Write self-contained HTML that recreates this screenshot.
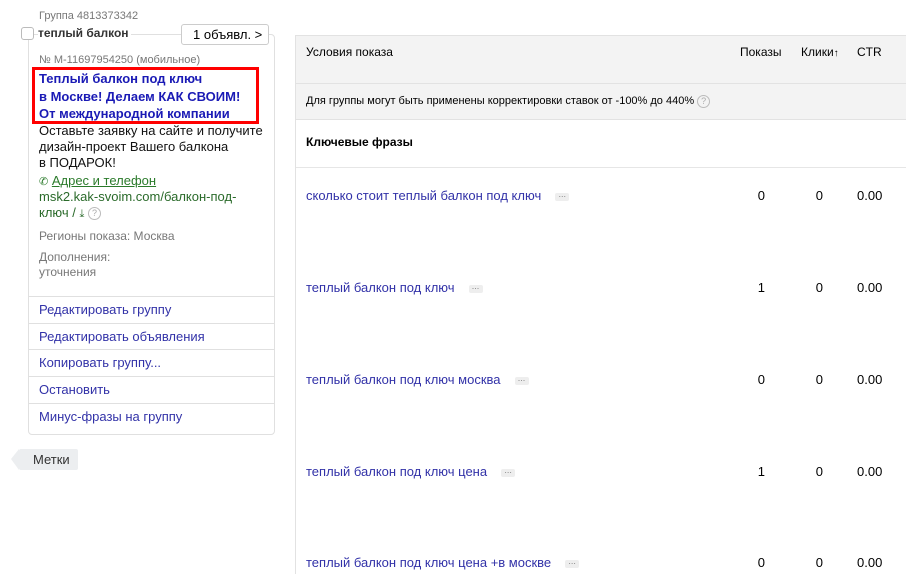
<!DOCTYPE html>
<html><head><meta charset="utf-8"><style>
*{margin:0;padding:0;box-sizing:border-box}
body{width:906px;height:574px;overflow:hidden;background:#fff;font-family:"Liberation Sans","Noto Sans CJK SC",sans-serif;color:#000;position:relative}
.a{position:absolute;white-space:nowrap}
.g{color:#777}
.card{position:absolute;left:28px;top:34px;width:247px;height:401px;border:1px solid #e0e0e0;border-radius:4px;background:#fff}
.menu{position:absolute;left:28px;width:247px;height:27px;border-top:1px solid #e0e0e0;font-size:13px;padding:5px 0 0 11px;color:#3232a8}
.kw{font-size:13px;color:#3232a8}
.dots{display:inline-block;width:14px;height:8px;background:#eee;border-radius:2px;color:#888;font-size:9px;line-height:3px;text-align:center;margin-left:14px;vertical-align:middle}
.n{font-size:13px;text-align:right}
</style></head><body>
<div class="card"></div>
<div class="a g" style="left:39px;top:10px;font-size:11px">Группа 4813373342</div>
<div class="a" style="left:21px;top:27px;width:13px;height:13px;border:1px solid #bbb;border-radius:3px;background:#fff"></div>
<div class="a" style="left:38px;top:26px;font-size:12px;font-weight:bold;color:#333;background:#fff;padding-right:2px">теплый балкон</div>
<div class="a" style="left:181px;top:24px;width:88px;height:21px;border:1px solid #ccc;border-radius:3px;background:#fff;font-size:13px;padding:2px 0 0 11px">1 объявл. &gt;</div>
<div class="a g" style="left:39px;top:54px;font-size:11px">№ М-11697954250 (мобильное)</div>
<div class="a" style="left:32px;top:67px;width:227px;height:57px;border:3px solid #f00"></div>
<div class="a" style="left:39px;top:70px;font-size:13px;font-weight:bold;color:#1a1ab5;line-height:17.5px">Теплый балкон под ключ<br>в Москве! Делаем КАК СВОИМ!<br>От международной компании</div>
<div class="a" style="left:39px;top:123px;font-size:13px;line-height:16px;color:#111">Оставьте заявку на сайте и получите<br>дизайн-проект Вашего балкона<br>в ПОДАРОК!</div>
<div class="a" style="left:39px;top:173px;font-size:13px;color:#2a7a2a"><span style="font-size:11px">✆</span> <u>Адрес и телефон</u></div>
<div class="a" style="left:39px;top:189px;font-size:13px;line-height:16px;color:#2a6a2a">msk2.kak-svoim.com/балкон-под-<br>ключ / <span style="font-size:11px">⤓</span> <span style="display:inline-block;width:13px;height:13px;border:1px solid #bbb;border-radius:50%;font-size:9px;color:#aaa;text-align:center;line-height:11px;vertical-align:1px">?</span></div>
<div class="a g" style="left:39px;top:229px;font-size:12px">Регионы показа: Москва</div>
<div class="a g" style="left:39px;top:250px;font-size:12px;line-height:15px">Дополнения:<br>уточнения</div>
<div class="menu" style="top:296px">Редактировать группу</div>
<div class="menu" style="top:323px">Редактировать объявления</div>
<div class="menu" style="top:349px">Копировать группу...</div>
<div class="menu" style="top:376px">Остановить</div>
<div class="menu" style="top:403px">Минус-фразы на группу</div>
<div class="a" style="left:19px;top:449px;width:59px;height:21px;background:#eceef0;border-radius:2px;font-size:13px;padding:3px 0 0 14px;color:#333">Метки</div>
<div class="a" style="left:11px;top:449px;width:0;height:0;border-top:10px solid transparent;border-bottom:11px solid transparent;border-right:8px solid #eceef0"></div>
<!-- right panel -->
<div class="a" style="left:295px;top:35px;width:611px;height:49px;background:#f3f3f3;border-top:1px solid #e2e2e2;border-bottom:1px solid #e2e2e2"></div>
<div class="a" style="left:295px;top:84px;width:611px;height:36px;background:#f3f3f3;border-bottom:1px solid #e2e2e2"></div>
<div class="a" style="left:295px;top:167px;width:611px;height:1px;background:#e6e6e6"></div>
<div class="a" style="left:295px;top:35px;width:1px;height:539px;background:#e2e2e2"></div>
<div class="a" style="left:306px;top:45px;font-size:12px">Условия показа</div>
<div class="a" style="left:740px;top:45px;font-size:12px">Показы</div>
<div class="a" style="left:801px;top:45px;font-size:12px">Клики<span style="font-size:10px">↑</span></div>
<div class="a" style="left:857px;top:45px;font-size:12px">CTR</div>
<div class="a" style="left:306px;top:95px;font-size:11px">Для группы могут быть применены корректировки ставок от -100% до 440% <span style="display:inline-block;width:13px;height:13px;border:1px solid #bbb;border-radius:50%;font-size:9px;color:#aaa;text-align:center;line-height:11px">?</span></div>
<div class="a" style="left:306px;top:135px;font-size:12px;font-weight:bold">Ключевые фразы</div>

<div class="a kw" style="left:306px;top:188px">сколько стоит теплый балкон под ключ<span class="dots">...</span></div>
<div class="a n" style="left:740px;top:188px;width:25px">0</div><div class="a n" style="left:800px;top:188px;width:23px">0</div><div class="a" style="left:857px;top:188px;font-size:13px">0.00</div>

<div class="a kw" style="left:306px;top:280px">теплый балкон под ключ<span class="dots">...</span></div>
<div class="a n" style="left:740px;top:280px;width:25px">1</div><div class="a n" style="left:800px;top:280px;width:23px">0</div><div class="a" style="left:857px;top:280px;font-size:13px">0.00</div>

<div class="a kw" style="left:306px;top:372px">теплый балкон под ключ москва<span class="dots">...</span></div>
<div class="a n" style="left:740px;top:372px;width:25px">0</div><div class="a n" style="left:800px;top:372px;width:23px">0</div><div class="a" style="left:857px;top:372px;font-size:13px">0.00</div>

<div class="a kw" style="left:306px;top:464px">теплый балкон под ключ цена<span class="dots">...</span></div>
<div class="a n" style="left:740px;top:464px;width:25px">1</div><div class="a n" style="left:800px;top:464px;width:23px">0</div><div class="a" style="left:857px;top:464px;font-size:13px">0.00</div>

<div class="a kw" style="left:306px;top:555px">теплый балкон под ключ цена +в москве<span class="dots">...</span></div>
<div class="a n" style="left:740px;top:555px;width:25px">0</div><div class="a n" style="left:800px;top:555px;width:23px">0</div><div class="a" style="left:857px;top:555px;font-size:13px">0.00</div>
</body></html>
